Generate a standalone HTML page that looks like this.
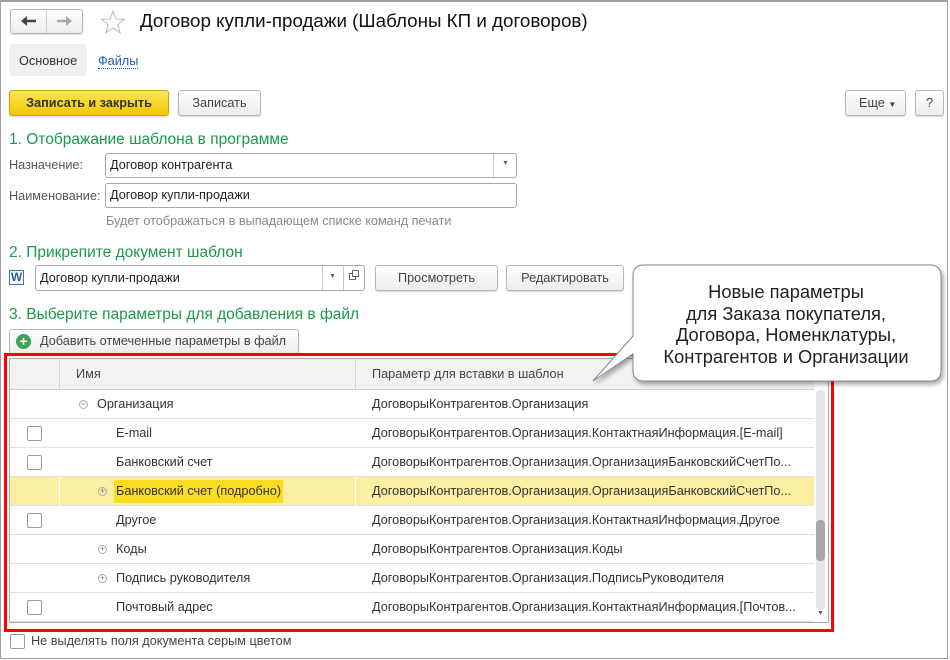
<!DOCTYPE html>
<html><head><meta charset="utf-8"><style>
*{box-sizing:border-box;margin:0;padding:0}
body{width:950px;height:660px;background:#fff;font-family:"Liberation Sans",Arial,sans-serif;font-size:12.7px;color:#333;position:relative;overflow:hidden}
.a{position:absolute;white-space:nowrap}
.btn{position:absolute;border:1px solid #b8b8b8;border-radius:3px;background:linear-gradient(#fff,#ececec);box-shadow:0 1px 1px rgba(0,0,0,.15);text-align:center;color:#444;white-space:nowrap}
.inp{position:absolute;border:1px solid #a8a8a8;border-radius:3px;background:#fff;padding-left:4px;color:#222}
.h{position:absolute;color:#1a9a4a;font-size:15.5px;white-space:nowrap}
.lbl{position:absolute;color:#555}
.cb{position:absolute;width:15px;height:15px;border:1px solid #9a9a9a;border-radius:2px;background:#fff}
.row{position:absolute;left:10px;width:804px;height:29px;border-bottom:1px solid #e2e2e2}
.row span{position:absolute;top:7px;white-space:nowrap}
.pm{position:absolute;width:9px;height:9px;border:1px solid #aaa;border-radius:50%;font-size:9px;line-height:7px;text-align:center;color:#777}
</style></head><body>
<div class="a" style="left:0;top:0;width:948px;height:659px;border:1px solid #a0a0a0;border-top:2px solid #a0a0a0"></div>
<!-- nav -->
<div class="btn" style="left:10px;top:9px;width:73px;height:25px;border-radius:3px"></div>
<div class="a" style="left:46px;top:10px;width:1px;height:23px;background:#ccc"></div>
<svg class="a" style="left:20px;top:14px" width="18" height="14" viewBox="0 0 18 14"><path d="M2 7 H16" stroke="#444" stroke-width="2.5"/><path d="M1 7 L7 2 V12 Z" fill="#444"/></svg>
<svg class="a" style="left:55px;top:14px" width="18" height="14" viewBox="0 0 18 14"><path d="M2 7 H16" stroke="#aaa" stroke-width="2.5"/><path d="M17 7 L11 2 V12 Z" fill="#aaa"/></svg>
<svg class="a" style="left:100px;top:9px" width="26" height="26" viewBox="0 0 26 26"><path d="M13 2 L16 10 L24.5 10.3 L17.8 15.5 L20.2 23.8 L13 19 L5.8 23.8 L8.2 15.5 L1.5 10.3 L10 10 Z" fill="none" stroke="#bbb" stroke-width="1"/></svg>
<div class="a" style="left:140px;top:10px;font-size:18.8px;color:#111">Договор купли-продажи (Шаблоны КП и договоров)</div>
<div class="a" style="left:9px;top:44px;width:78px;height:32px;background:#f0f0f0;border-radius:4px"></div>
<div class="a" style="left:19px;top:54px;color:#333">Основное</div>
<div class="a" style="left:98px;top:54px;color:#2060b0;border-bottom:1px dotted #2060b0;line-height:14px">Файлы</div>
<!-- toolbar -->
<div class="btn" style="left:9px;top:90px;width:160px;height:26px;background:linear-gradient(#fbe55a,#f0c800);border-color:#c9a800;color:#333;line-height:24px;font-weight:bold">Записать и закрыть</div>
<div class="btn" style="left:178px;top:90px;width:83px;height:26px;line-height:24px">Записать</div>
<div class="btn" style="left:845px;top:90px;width:61px;height:26px;line-height:24px;text-align:left;padding-left:13px">Еще <span style="font-size:8px">▼</span></div>
<div class="btn" style="left:915px;top:90px;width:29px;height:26px;line-height:24px">?</div>
<!-- section 1 -->
<div class="h" style="left:9px;top:131px">1. Отображание шаблона в программе</div>
<div class="lbl" style="left:9px;top:158px">Назначение:</div>
<div class="inp" style="left:105px;top:153px;width:412px;height:25px;line-height:23px">Договор контрагента</div>
<div class="a" style="left:493px;top:154px;width:1px;height:23px;background:#ccc"></div>
<div class="a" style="left:502px;top:160px;font-size:7px;color:#666">▼</div>
<div class="lbl" style="left:9px;top:189px">Наименование:</div>
<div class="inp" style="left:105px;top:183px;width:412px;height:25px;line-height:23px">Договор купли-продажи</div>
<div class="lbl" style="left:106px;top:214px;color:#8a8a8a">Будет отображаться в выпадающем списке команд печати</div>
<!-- section 2 -->
<div class="h" style="left:9px;top:244px">2. Прикрепите документ шаблон</div>
<div class="a" style="left:9px;top:270px;width:15px;height:15px;border:1px solid #3c6fb8;background:#fff;color:#2a5caa;font-weight:bold;font-size:12px;line-height:13px;text-align:center">W</div>
<div class="inp" style="left:35px;top:265px;width:330px;height:26px;line-height:24px">Договор купли-продажи</div>
<div class="a" style="left:322px;top:266px;width:1px;height:24px;background:#ccc"></div>
<div class="a" style="left:343px;top:266px;width:1px;height:24px;background:#ccc"></div>
<div class="a" style="left:329px;top:273px;font-size:7px;color:#666">▼</div>
<div class="a" style="left:349px;top:273px;width:7px;height:7px;border:1px solid #666"></div>
<div class="a" style="left:352px;top:270px;width:7px;height:7px;border:1px solid #666;background:#fff"></div>
<div class="btn" style="left:375px;top:265px;width:123px;height:26px;line-height:24px">Просмотреть</div>
<div class="btn" style="left:506px;top:265px;width:118px;height:26px;line-height:24px">Редактировать</div>
<!-- section 3 -->
<div class="h" style="left:9px;top:306px">3. Выберите параметры для добавления в файл</div>
<div class="btn" style="left:9px;top:329px;width:290px;height:25px;line-height:23px;text-align:left;padding-left:30px">Добавить отмеченные параметры в файл</div>
<div class="a" style="left:16px;top:334px;width:15px;height:15px;border-radius:50%;background:#3aa655;color:#fff;font-weight:bold;font-size:14px;line-height:15px;text-align:center">+</div>
<!-- table -->
<div class="a" style="left:4px;top:353px;width:830px;height:279px;border:3px solid #f00"></div>
<div class="a" style="left:9px;top:358px;width:820px;height:265px;border:1px solid #a8a8a8"></div>
<div class="a" style="left:10px;top:359px;width:804px;height:31px;background:#f2f2f2;border-bottom:1px solid #d0d0d0"></div>
<div class="a" style="left:59px;top:359px;width:1px;height:31px;background:#d4d4d4"></div>
<div class="a" style="left:355px;top:359px;width:1px;height:31px;background:#d4d4d4"></div>
<div class="a" style="left:76px;top:367px;color:#444">Имя</div>
<div class="a" style="left:372px;top:367px;color:#444">Параметр для вставки в шаблон</div>

<div class="row" style="top:390px"><span class="pm" style="left:69px;top:10px">−</span><span style="left:87px">Организация</span><span style="left:362px">ДоговорыКонтрагентов.Организация</span></div>
<div class="row" style="top:419px"><span class="cb" style="left:17px;top:7px"></span><span style="left:106px">E-mail</span><span style="left:362px">ДоговорыКонтрагентов.Организация.КонтактнаяИнформация.[E-mail]</span></div>
<div class="row" style="top:448px"><span class="cb" style="left:17px;top:7px"></span><span style="left:106px">Банковский счет</span><span style="left:362px">ДоговорыКонтрагентов.Организация.ОрганизацияБанковскийСчетПо...</span></div>
<div class="row" style="top:477px;background:#fbefa4"><span style="left:49px;top:0;width:1px;height:29px;background:#fff"></span><span style="left:345px;top:0;width:1px;height:29px;background:#fff"></span><span class="pm" style="left:88px;top:10px">+</span><span style="left:104px;top:3px;background:#fadc20;padding:4px 2px 5px 2px">Банковский счет (подробно)</span><span style="left:362px">ДоговорыКонтрагентов.Организация.ОрганизацияБанковскийСчетПо...</span></div>
<div class="row" style="top:506px"><span class="cb" style="left:17px;top:7px"></span><span style="left:106px">Другое</span><span style="left:362px">ДоговорыКонтрагентов.Организация.КонтактнаяИнформация.Другое</span></div>
<div class="row" style="top:535px"><span class="pm" style="left:88px;top:10px">+</span><span style="left:106px">Коды</span><span style="left:362px">ДоговорыКонтрагентов.Организация.Коды</span></div>
<div class="row" style="top:564px"><span class="pm" style="left:88px;top:10px">+</span><span style="left:106px">Подпись руководителя</span><span style="left:362px">ДоговорыКонтрагентов.Организация.ПодписьРуководителя</span></div>
<div class="row" style="top:593px"><span class="cb" style="left:17px;top:7px"></span><span style="left:106px">Почтовый адрес</span><span style="left:362px">ДоговорыКонтрагентов.Организация.КонтактнаяИнформация.[Почтов...</span></div>
<div class="a" style="left:816px;top:390px;width:9px;height:220px;background:#e6e6e6;border-radius:4px"></div>
<div class="a" style="left:816px;top:520px;width:9px;height:41px;background:#a8a8a8;border-radius:4px"></div>
<div class="a" style="left:817px;top:610px;font-size:7px;color:#666">▼</div>
<div class="cb" style="left:10px;top:634px"></div>
<div class="a" style="left:31px;top:634px;color:#444">Не выделять поля документа серым цветом</div>
<!-- callout -->
<svg class="a" style="left:585px;top:260px" width="365" height="135" viewBox="0 0 365 135">
<defs><filter id="s" x="-10%" y="-10%" width="130%" height="130%"><feDropShadow dx="2" dy="3" stdDeviation="2.5" flood-color="#000" flood-opacity=".35"/></filter></defs>
<path d="M59 5 H345 Q356 5 356 16 V110 Q356 121 345 121 H59 Q48 121 48 110 V94 L8 121 L48 76 V16 Q48 5 59 5 Z" fill="#fff" stroke="#888" stroke-width="1" filter="url(#s)"/>
</svg>
<div class="a" style="left:633px;top:281px;width:306px;text-align:center;font-size:18.3px;line-height:21.7px;color:#222;white-space:normal">Новые параметры<br>для Заказа покупателя,<br>Договора, Номенклатуры,<br>Контрагентов и Организации</div>
</body></html>
